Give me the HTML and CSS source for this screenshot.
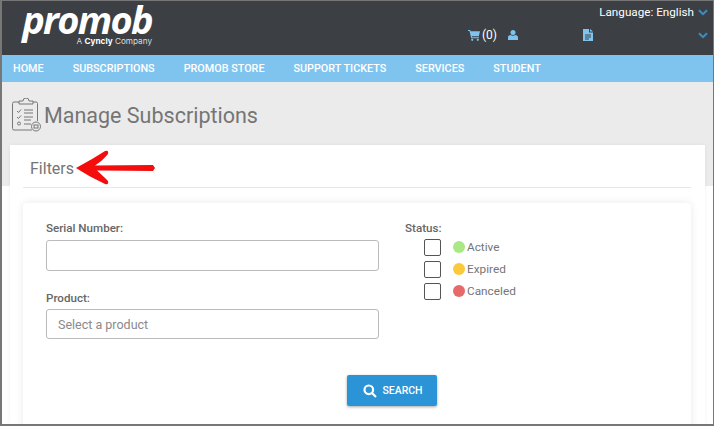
FILE: index.html
```html
<!DOCTYPE html>
<html lang="en">
<head>
    <meta charset="UTF-8">
    <meta name="viewport" content="width=device-width, initial-scale=1.0">
    <title>Manage Subscriptions</title>
    <link rel="stylesheet" href="styles.css">
</head>
<body>
    <div class="window">
        <header class="topbar">
            <div class="logo">
                <span class="logo-name">promob</span>
                <span class="logo-sub">A <b>Cyncly</b> Company</span>
            </div>
            <div class="top-right">
                <div class="lang-row">
                    <span>Language: English</span>
                    <svg class="chevron" viewBox="0 0 10 7"><path d="M1 1.2 5 5.2 9 1.2" /></svg>
                </div>
                <div class="tools-row">
                    <svg class="icon-cart" viewBox="0 0 12 11"><path d="M0 0h2.2l.4 1.3H12l-1.2 5H3.8l.2 1h7v1H3.2L1.5 1H0z" /><circle cx="4.2" cy="9.8" r="1.1" /><circle cx="9.8" cy="9.8" r="1.1" /></svg>
                    <span class="cart-count">(0)</span>
                    <svg class="icon-user" viewBox="0 0 10 10"><circle cx="5" cy="2.6" r="2.5" /><path d="M0 10V7.6C0 6 1.4 5 2.6 5c.7.5 1.5.8 2.4.8S6.7 5.5 7.4 5C8.6 5 10 6 10 7.6V10z" /></svg>
                    <svg class="icon-doc" viewBox="0 0 10 12"><path d="M0 0h6v3.5h4V12H0zM7 0l3 2.5H7z" /><path class="doc-lines" d="M2 6h6M2 8h6M2 10h4" /></svg>
                    <svg class="chevron chevron-last" viewBox="0 0 10 7"><path d="M1 1.2 5 5.2 9 1.2" /></svg>
                </div>
            </div>
        </header>

        <nav class="menu">
            <a href="#">HOME</a>
            <a href="#">SUBSCRIPTIONS</a>
            <a href="#">PROMOB STORE</a>
            <a href="#">SUPPORT TICKETS</a>
            <a href="#">SERVICES</a>
            <a href="#">STUDENT</a>
        </nav>

        <main class="content">
            <div class="page-title">
                <svg class="icon-title" viewBox="0 0 30 34">
                    <path d="M8 4H3a1.5 1.5 0 0 0-1.5 1.5v25A1.5 1.5 0 0 0 3 32h18M22 4h3a1.5 1.5 0 0 1 1.5 1.5V23" />
                    <path d="M8 6V3h4a3 3 0 0 1 6 0h4v3z" />
                    <path d="M6 13l1.5 1.5L10 11.5M6 19l1.5 1.5L10 17.5M13 12h9M13 15h9M13 19h9M13 22h7M13 26h7" />
                    <circle cx="8" cy="25.5" r="1.5" />
                    <circle cx="25" cy="28.5" r="4.5" />
                    <rect x="23" y="27" width="4" height="3" />
                </svg>
                <h1>Manage Subscriptions</h1>
            </div>

            <section class="panel">
                <h2 class="panel-title">Filters</h2>
                <form class="card">
                    <div class="fields">
                        <div class="col-left">
                            <label class="field-label">Serial Number:</label>
                            <input type="text" class="text-input">
                            <label class="field-label product-label">Product:</label>
                            <input type="text" class="text-input product-input" placeholder="Select a product">
                        </div>
                        <div class="col-status">
                            <div class="field-label">Status:</div>
                            <ul class="status-list">
                                <li><span class="box"></span><span class="dot dot-active"></span>Active</li>
                                <li><span class="box"></span><span class="dot dot-expired"></span>Expired</li>
                                <li><span class="box"></span><span class="dot dot-canceled"></span>Canceled</li>
                            </ul>
                        </div>
                    </div>
                    <div class="actions">
                        <button type="button" class="search-btn">
                            <svg class="icon-search" viewBox="0 0 14 14"><circle cx="5.8" cy="5.8" r="4.3" /><path d="M9 9l4 4" /></svg>
                            SEARCH
                        </button>
                    </div>
                </form>
            </section>
        </main>

        <!-- annotation drawn on top of the screenshot -->
        <svg class="arrow" viewBox="0 0 84 40">
            <path d="M3 20C14 14 24 8 32 3Q36 2 35 6C31 11 26 15 22 17.5L80 17L82 20 80 23L24 22.5C28 26 32 30 35 33Q36 37 32 36C22 31 12 26 3 20Z" />
        </svg>
    </div>
</body>
</html>
```

FILE: styles.css
```css
body {
    margin: 0;
    background-color: #fff;
    font-family: Roboto, Arial, sans-serif;
}
.window {
    position: relative;
    width: 711px;
    height: 423px;
    border: 1px solid #777;
    border-left-width: 2px;
    border-bottom-width: 2px;
    overflow: hidden;
    background-color: #fff;
}

/* top bar */
.topbar {
    display: flex;
    justify-content: space-between;
    height: 54px;
    background-color: #3c4045;
}
.logo {
    display: flex;
    flex-direction: column;
    align-items: flex-end;
    width: 134px;
    margin-left: 16px;
    color: #fff;
}
.logo-name {
    font-family: "Open Sans", sans-serif;
    font-size: 38px;
    line-height: 36px;
    font-weight: 700;
    font-style: italic;
    letter-spacing: -1.7px;
}
.logo-sub {
    font-family: Inter, sans-serif;
    font-size: 8.2px;
    line-height: 9px;
    color: #ddd;
}
.logo-sub b {
    color: #fff;
}
.top-right {
    display: flex;
    flex-direction: column;
    width: 240px;
    padding-right: 5px;
    color: #fff;
    font-size: 12px;
}
.lang-row {
    display: flex;
    justify-content: flex-end;
    align-items: center;
    gap: 4px;
    height: 14px;
    margin-top: 4px;
    font-size: 11.7px;
}
.tools-row {
    display: flex;
    align-items: center;
    height: 16px;
    margin-top: 8px;
}
.chevron {
    width: 10px;
    height: 7px;
    fill: none;
    stroke: #3b8ec4;
    stroke-width: 2;
}
.chevron-last {
    margin-left: auto;
}
.icon-cart {
    width: 12px;
    height: 11px;
    margin-right: 2px;
    fill: #7fc4ef;
}
.cart-count {
    width: 14px;
}
.icon-user {
    width: 10px;
    height: 10px;
    margin-left: 12px;
    fill: #7fc4ef;
}
.icon-doc {
    width: 10px;
    height: 12px;
    margin-left: 65px;
    fill: #7fc4ef;
}
.doc-lines {
    fill: none;
    stroke: #3c4045;
    stroke-width: 1;
}

/* menu */
.menu {
    display: flex;
    gap: 29px;
    height: 27px;
    padding-left: 11px;
    background-color: #7fc4ef;
}
.menu a {
    color: #fff;
    font-size: 10.8px;
    font-weight: 500;
    line-height: 27px;
    text-decoration: none;
}

/* page */
.content {
    height: 342px;
    background: linear-gradient(#ebebeb 104px, #fff 104px);
}
.page-title {
    display: flex;
    align-items: center;
    gap: 3px;
    height: 63px;
    padding-left: 9px;
}
.icon-title {
    width: 30px;
    height: 34px;
    margin-top: 3px;
    fill: none;
    stroke: #777;
    stroke-width: 1;
}
h1 {
    margin: 3px 0 0;
    color: #757575;
    font-size: 21.5px;
    font-weight: 400;
}
.panel {
    margin: 0 8px;
    padding: 0 14px 0 13px;
    height: 279px;
    background-color: #fff;
    box-shadow: 0 0 4px rgba(0, 0, 0, 0.06);
}
.panel-title {
    margin: 0;
    padding: 14px 7px 9px;
    height: 19px;
    line-height: 19px;
    border-bottom: 1px solid #e8e8e8;
    color: #757575;
    font-size: 16px;
    font-weight: 400;
}
.card {
    margin-top: 15px;
    padding: 18px 23px;
    height: 240px;
    background-color: #fff;
    box-shadow: 0 0 8px rgba(0, 0, 0, 0.09);
    border-radius: 4px;
}
.fields {
    display: flex;
    gap: 26px;
}
.col-left {
    width: 333px;
}
.field-label {
    display: block;
    color: #666;
    font-size: 11.6px;
    font-weight: 500;
    line-height: 14px;
}
.text-input {
    display: block;
    box-sizing: border-box;
    width: 100%;
    height: 31px;
    margin-top: 5px;
    padding: 0 11px;
    border: 1px solid #bbb;
    border-radius: 3px;
    font-family: Roboto, Arial, sans-serif;
    font-size: 12.5px;
}
.text-input::placeholder {
    color: #8a8a8a;
}
.product-label {
    margin-top: 20px;
}
.product-input {
    height: 30px;
    margin-top: 4px;
}
.status-list {
    list-style: none;
    margin: 1px 0 0;
    padding: 0 0 0 19px;
}
.status-list li {
    display: flex;
    align-items: center;
    height: 22px;
    color: #757575;
    font-size: 11.8px;
}
.box {
    box-sizing: border-box;
    width: 17px;
    height: 17px;
    margin-right: 12px;
    border: 1px solid #555;
    border-radius: 2px;
}
.dot {
    width: 12px;
    height: 12px;
    margin-right: 2px;
    border-radius: 50%;
}
.dot-active {
    background-color: #aae885;
}
.dot-expired {
    background-color: #fcc93a;
}
.dot-canceled {
    background-color: #e66a6a;
}
.actions {
    display: flex;
    margin-top: 36px;
    padding-left: 301px;
}
.search-btn {
    display: flex;
    align-items: center;
    justify-content: center;
    gap: 5px;
    width: 90px;
    height: 31px;
    padding: 0 0 0 2px;
    border: 0;
    border-radius: 2px;
    background-color: #2a94d6;
    box-shadow: 0 1px 3px rgba(0, 0, 0, 0.35);
    color: #fff;
    font-family: Roboto, Arial, sans-serif;
    font-size: 10.5px;
    font-weight: 500;
}
.icon-search {
    width: 14px;
    height: 14px;
    fill: none;
    stroke: #fff;
    stroke-width: 2.2;
}

/* red arrow */
.arrow {
    position: absolute;
    left: 71px;
    top: 147px;
    width: 84px;
    height: 40px;
    fill: #f30d0d;
}
```
